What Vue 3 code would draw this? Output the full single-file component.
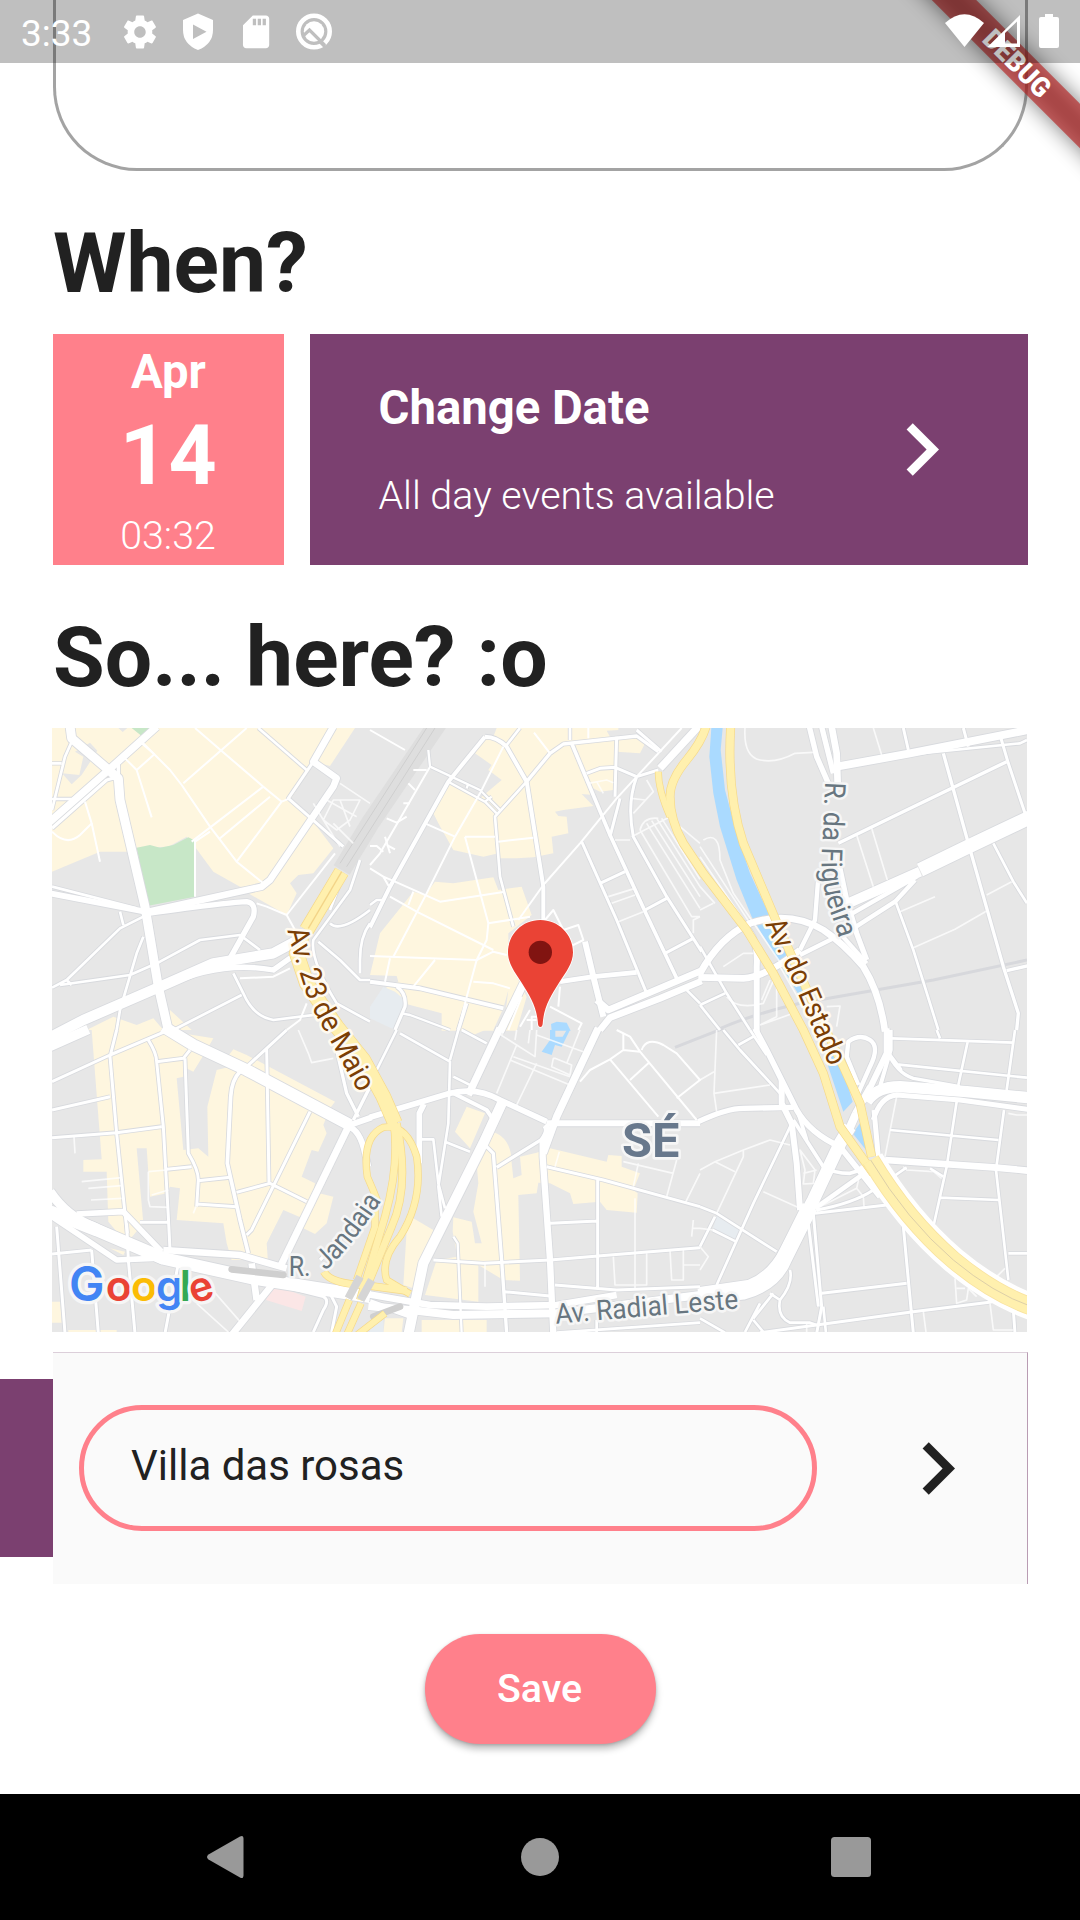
<script setup>
// Map geometry: each sheet is a 990 x 930 cell of the drawing plane,
// placed by its origin; streets are [width, path].
const sheets = [
  {
    x: 0, y: 0,
    land: [
      ['#fef6df', 'M36 24H945L870 138 820 125 800 150 765 215 805 230 785 260 880 385 820 460 775 465 750 490 770 520 740 585 625 520 665 500 600 500 520 455 468 385 440 350 385 380 290 383 270 395 180 395 140 412 36 455Z M140 930L220 890 290 915 340 895 370 930Z M390 870L455 930H390Z'],
      ['#e7e7e7', 'M150 68L172 92 125 165 95 193 66 160 118 165 130 110 105 95Z M825 130L885 175 800 285 750 240 785 190Z M235 24H262L248 36Z'],
      ['#c7e7c7', 'M290 383L330 375 360 383 400 375 445 352 466 362 465 530 325 557Z M275 24H345L305 48Z'],
    ],
    streets: [
      [27, 'M90 18L95 55 235 175 240 240 315 560 355 800 385 932'],
      [22, 'M30 305L200 155 350 20'],
      [10, 'M36 325L200 180 235 170V130L255 110'],
      [8, 'M36 130H65M95 65L75 110 36 270M36 237H95'],
      [6, 'M36 335Q80 380 120 345L155 310 135 245M155 310L180 425M255 115L290 150 335 292M290 150L343 103 305 70'],
      [6, 'M305 65L390 150 425 195 510 320 590 425 670 490M430 190L620 24M465 24L545 93 670 200 725 245 590 425M670 200L455 365M690 230L540 355M725 245L750 235M510 335L465 365V530'],
      [8, 'M655 24L800 150'],
      [20, 'M880 20L820 125 890 175 880 200 690 480 665 500 325 575'],
      [9, 'M820 125L745 235 910 380'],
      [18, 'M30 520L315 575'],
      [8, 'M36 500L290 565'],
      [16, 'M325 580Q580 545 620 545 650 550 640 590L570 715'],
      [6, 'M650 550L680 560 740 585 885 400M740 585L765 630'],
      [31, 'M30 952L130 900 360 800 520 730 700 700 770 662'],
      [16, 'M370 800Q540 720 700 750L770 700'],
      [8, 'M36 803L80 780 240 625 310 590M60 795L270 765 360 725 480 660 600 645 660 690M240 575L250 615M310 650L290 700 240 870 230 930M80 780L95 795'],
      [8, 'M580 760L610 820Q640 890 700 900L860 880M400 930L605 825'],
      [6, 'M600 775L700 770 750 745M800 850L780 900 740 930'],
      [8, 'M960 420L930 510 820 660Q810 720 890 850L990 905M870 610Q900 640 990 570M835 665L900 720 960 780H990M990 610Q960 650 960 720V760M900 490L870 570'],
      [5, 'M850 300L880 240 960 240 930 300 890 330ZM900 190L990 250M850 300L900 380M880 310L940 370M820 250L850 300M860 240L950 290M900 240L930 320'],
    ],
  },
  {
    x: 990, y: 0,
    land: [
      ['#fef6df', 'M380 24H745V30L710 32 720 50 790 50 825 70 810 100 740 95 730 210 690 215 650 195 670 225 635 222 670 258 580 270 555 275 565 288 590 290 595 340 545 350 550 400 490 412 440 415 385 415V400L340 410 250 390 205 310 190 280 215 230 235 180 330 235 395 180 355 150 365 135 315 100 345 50 370 50Z'],
      ['#fef6df', 'M195 485L250 490 370 472 385 510 455 500 485 585 415 640V720L470 830 440 932H215V880L100 850 40 835 50 800 85 785 80 768 0 765 30 640 130 515 165 525Z'],
      ['#e7ecf0', 'M40 800L75 815 105 840 100 880 75 930 0 895V860Z'],
      ['#e7e7e7', 'M415 810L400 930H370L400 865Z'],
      ['#aadaff', 'M543 912L560 905 590 908 602 932H545Z'],
    ],
    streets: [
      [12, 'M345 50L235 185 60 500 0 622M345 50Q380 50 410 80L470 185 520 500V610'],
      [8, 'M450 24L410 75M600 24V60M470 185L375 290 390 470 430 620'],
      [10, 'M470 185L540 100 580 72 800 48 865 95'],
      [11, 'M605 70L720 345 830 585 920 775'],
      [7, 'M175 90L180 140 330 210 390 270M235 185L345 245 380 280M345 245L365 230M290 205L295 190'],
      [6, 'M400 80L330 220 255 350 165 530 70 710M0 30L105 90M180 140L30 400 0 435M165 310L255 350M285 350L375 350M385 365L490 353M285 350L355 610 350 660 320 720 285 850 265 930M492 38L540 100M655 24V55'],
      [6, 'M130 150L170 150M115 190L135 210M100 250H120M50 295L80 308 110 290M0 378H20L40 395M50 375L75 388M45 350L60 400'],
      [6, 'M445 600L520 495 630 370 740 235 800 170 935 24'],
      [22, 'M985 20L870 145'],
      [9, 'M865 150L800 170 735 142 690 145 650 160M740 50L735 230M750 235L720 350M800 170Q770 250 790 350L890 530 995 695M800 30L875 95'],
      [9, 'M635 365L740 600 830 820M690 490L765 455M825 570L890 535M885 700L970 655'],
      [5, 'M715 530L795 505M725 550L795 525M745 605L820 575M735 360H780M785 235L825 240M830 180L850 215 790 280M655 190L710 180 730 188M680 185L700 220'],
      [6, 'M0 708L320 720 370 695 410 705M60 530L140 575 370 690M0 445L40 470 60 505M40 470L75 485 210 545 405 515M355 610L480 590M130 515L115 555M195 720L130 800M60 715L45 785M310 785L370 790 420 805'],
      [12, 'M0 785L150 805 400 865'],
      [10, 'M80 800Q110 820 105 860L75 930M290 850L265 930'],
      [7, 'M95 880L120 885 240 930M0 555L20 540H45'],
      [24, 'M480 750L390 935'],
      [14, 'M570 785L670 770 800 757'],
      [18, 'M645 665L670 770 700 890'],
      [20, 'M995 752L715 870 680 840M690 930L720 893 870 835 995 783'],
      [6, 'M525 600L550 570 580 630 625 615 640 660 600 680M570 800L565 860M540 860L635 910 625 930M450 920L480 870M470 900H500M485 930V890H510M455 830L415 930'],
      [5, 'M810 330L965 590H990M830 310L990 565M845 302L990 530M860 295L990 500M875 295L990 478M785 350L900 290M810 330Q820 290 865 295M990 590L970 600V640M930 320L990 370'],
      [8, 'M945 805L990 850'],
    ],
  },
  {
    x: 1980, y: 0,
    land: [
      ['#aadaff', 'M34 24H68L62 90 75 210 110 340 150 460 215 600 290 740 345 850 375 930H350L300 830 215 690 155 590 110 480 60 320 40 220 28 110Z'],
    ],
    streets: [
      [16, 'M328 20L350 110 385 190M365 20L400 160'],
      [20, 'M395 20L410 100 413 190'],
      [24, 'M410 140L630 100 985 30'],
      [8, 'M630 103L960 70 981 60'],
      [10, 'M415 370L600 280 920 125M730 100L805 370 910 740 955 880 950 930'],
      [9, 'M610 24L625 90M790 24L805 80M900 45L925 130 975 280'],
      [5, 'M135 24Q130 110 180 120 230 130 285 100L340 97M520 24L545 105M470 345L520 500M515 325L562 480'],
      [42, 'M990 292L800 382 660 450'],
      [30, 'M660 455L440 552'],
      [13, 'M650 470L440 590M645 480L585 545 460 625 300 705'],
      [8, 'M880 370L940 485 981 550M585 540L640 690 715 930'],
      [5, 'M600 575L705 530M640 683L765 628 860 573M860 525L935 485'],
      [16, 'M410 400L440 540 470 640 500 720'],
      [20, 'M0 760Q60 650 150 610 270 570 370 630 430 670 490 740 540 820 555 935'],
      [13, 'M355 470L345 600 300 690M420 640L500 730'],
      [20, 'M-5 772L130 775Q200 770 300 690'],
      [18, 'M140 625Q175 660 170 740V935'],
      [8, 'M0 680L80 820 150 930M0 855L75 820M0 855L60 930'],
      [10, 'M920 752L985 737'],
      [5, 'M70 740L130 700H160M80 830Q110 870 190 850L230 760V890L180 915M210 780L185 840M380 860L420 858 410 920M180 915L280 880M10 360Q60 330 60 420L100 520 290 800M0 380L150 610M0 410L130 600M0 570L40 550M0 500L45 550M240 740L350 930'],
    ],
  },
  {
    x: 0, y: 930,
    land: [
      ['#fef6df', 'M155 0H365L520 25 500 60 460 125 430 110V140L410 145 430 360 475 355 505 380 502 230 530 120 570 110 567 75 580 58 620 75 885 215 870 235 850 285 860 310 835 365 815 360 785 440 825 460 820 485 880 500 860 580 825 612 790 595 800 570 730 540 680 640 685 710 620 690 575 690 560 640 550 580 410 570 420 475 390 470 380 490 330 500 320 355 290 355 310 580 260 640 205 575 200 425H130V390L185 388Z'],
      ['#fef6df', 'M210 655L255 665 250 675ZM36 815H60L65 878H36ZM85 900H230V908H85Z'],
      ['#fbe6e6', 'M695 762L797 800 785 843 678 810Z'],
    ],
    streets: [
      [35, 'M370 -10L460 45 620 120 930 285'],
      [29, 'M28 50L145 -2'],
      [9, 'M36 155L210 75 375 5M230 0L210 80 230 310 255 550 262 610M36 240L210 200M36 323L230 308 365 290M325 30Q350 70 350 95L370 290 385 560 390 660M350 95L430 85 450 60M435 85L445 370Q475 420 475 450L470 530M380 418L455 410M475 452L570 442M470 522L590 530'],
      [11, 'M600 125Q575 150 572 200L562 400 600 570 625 670'],
      [9, 'M620 110L680 55 740 0M680 55L687 460M590 487L690 460 800 515M810 245L635 600 620 615'],
      [21, 'M925 290L720 712'],
      [18, 'M925 290Q960 300 975 370L985 410'],
      [10, 'M890 60L920 190 955 260M990 170L940 270'],
      [18, 'M930 285L995 262'],
      [28, 'M30 485Q80 560 160 590L370 690'],
      [38, 'M30 545L170 600 370 685 640 745 990 800'],
      [17, 'M36 560L230 690 340 685'],
      [17, 'M110 552L250 545 365 665'],
      [20, 'M370 660L600 675 740 715'],
      [9, 'M36 672L155 660M50 590L75 910M155 660L175 910M260 580L265 690 285 910M415 700L375 910M300 577H385'],
      [20, 'M635 700L650 810M700 760L575 915'],
      [9, 'M700 762L850 800Q870 810 850 840L820 906M870 790L890 830 875 906'],
      [5, 'M470 820L565 906M500 760L605 880M325 425V510L330 530 385 532M325 425L380 420M335 495L385 480M125 455L245 443M145 475L245 467M153 510L245 505M102 320L105 370M460 550L468 530M775 0L805 70 815 98 880 85'],
      [10, 'M840 690L870 660 980 540'],
    ],
  },
  {
    x: 990, y: 930,
    land: [
      ['#fef6df', 'M270 0H345L310 15ZM290 230L345 250 300 355 255 305ZM345 300Q425 310 425 400L430 445 455 435 450 380 500 368 540 355 710 395 715 375 755 378V410L810 430 790 480 803 490 800 548 710 540 690 515 610 522 600 490 540 460 505 458 500 490 445 495 450 752 400 750 325 705V815L165 795 200 690 262 680 248 605 250 562 305 575 315 640 335 640 310 545 325 460 320 400 345 350Z'],
      ['#fef6df', 'M130 565L190 600 130 775 100 765 110 600ZM155 870H350V908H155ZM45 865H100L95 908H40Z'],
      ['#e7ecf0', 'M0 880L40 870V908H0Z'],
      ['#aadaff', 'M540 0H556V20H578L590 0H600L575 50 555 45 545 75 515 65 540 30Z'],
    ],
    streets: [
      [17, 'M0 262L240 190Q320 170 390 210L530 275'],
      [18, 'M530 280H990'],
      [22, 'M390 -6L295 195'],
      [30, 'M398 215L340 340 160 700 115 915'],
      [12, 'M250 190L350 240 365 262'],
      [17, 'M162 222L148 250V400'],
      [8, 'M80 0L20 120M90 10L240 95 235 280 205 470 215 560M155 328H190L205 460 225 535M250 140L310 170M265 0L240 90M275 0L350 40M225 335L300 365'],
      [10, 'M345 345L370 370 395 690 410 910M380 412L520 325'],
      [22, 'M685 -6L560 260 520 370'],
      [19, 'M525 285Q540 300 518 330V380L540 690 550 912'],
      [9, 'M530 410L700 450 990 530M683 450V775M540 580L683 573M190 690L340 700 540 690 720 675 990 653M555 765L740 780 990 770M400 785L540 798'],
      [7, 'M250 620L263 640 275 910'],
      [20, 'M-5 793L180 825 350 830 560 825 740 795'],
      [24, 'M-5 828L140 842 250 855 560 850 990 795'],
      [16, 'M0 815L120 858'],
      [5, 'M385 10L440 45 380 190M430 80L500 105 600 140M420 90L600 165M500 100L440 225M630 0L590 100M550 85L545 110 600 135 605 105 555 85ZM400 0L395 15M440 0L435 30M440 45L495 80 500 0M480 0L475 40M500 15L640 65'],
      [5, 'M345 700V770M568 365L555 410M805 400L790 470M795 505V780M730 680L735 765H830V670M900 660L905 750H940V660M970 570L965 620M970 595H990M940 705H990M760 395L910 430M920 390L890 500M990 430L945 520'],
      [6, 'M630 155L660 120 720 88 865 260M720 88L760 60 810 65 780 20 740 0M760 60V10M815 60Q830 20 880 45L920 70 990 150 920 205M810 65L980 270M780 150L835 100'],
      [8, 'M560 908L990 878M680 870V910'],
    ],
  },
  {
    x: 1980, y: 930,
    land: [
      ['#e7ecf0', 'M50 555L130 595 108 635 38 600Z'],
      ['#aadaff', 'M372 60L385 110 430 245 458 215 425 105 400 60ZM458 310L480 280 510 375Z'],
    ],
    streets: [
      [8, 'M70 0L120 60 240 190'],
      [17, 'M165 -5L200 60 290 240Q330 310 420 350L540 500'],
      [16, 'M-5 275Q80 235 130 235L280 232'],
      [5, 'M50 0L42 190 50 245M42 190L210 165M0 150L42 125'],
      [8, 'M115 45L160 20M150 0L200 75'],
      [18, 'M245 150V220L275 280 290 400 300 540'],
      [8, 'M275 280L160 520 50 765M0 530L50 550 230 665M38 600L108 635M0 650L45 560'],
      [11, 'M280 270L370 410Q400 430 450 430L500 415M295 250L320 330'],
      [5, 'M190 485L300 535M0 420L45 395 130 360 210 330 270 345M45 395L105 425M130 360V380L50 550M0 595L40 600M0 650L25 680 0 720M300 360L345 420 340 460 310 462 315 420ZM310 430L350 420'],
      [38, 'M0 790L150 768Q220 740 260 660L340 510 420 340 450 290'],
      [48, 'M-5 800L130 785Q220 760 250 690L330 530'],
      [18, 'M425 340L465 250M450 300L490 210M465 250L510 170'],
      [14, 'M500 425L345 535'],
      [9, 'M520 480Q460 520 350 540M345 550L560 525M340 550L365 830 350 910M325 580L355 830'],
      [5, 'M480 430L470 475 490 500 492 530M470 475L360 530'],
      [34, 'M500 215Q530 170 600 170L800 185 985 203'],
      [15, 'M520 270Q540 200 590 195L780 210 985 238'],
      [10, 'M560 60Q590 130 640 145L780 170'],
      [13, 'M470 200L510 110Q540 50 510 30 480 10 445 35L440 80 475 165'],
      [18, 'M490 215L560 70V-5'],
      [12, 'M572 0V60L540 170'],
      [8, 'M575 25L940 38M945 0L920 180M590 103L981 143M803 35L775 165M710 0L720 25M560 60L605 120'],
      [8, 'M770 215L740 410 700 590M570 300L895 330M912 240L888 420 925 750M720 503L895 510M925 670H985'],
      [5, 'M590 200L555 380M925 250L950 255H981M610 410L620 420 700 425 725 445'],
      [20, 'M555 390L880 412 985 422'],
      [15, 'M522 240L535 380'],
      [8, 'M580 440L620 412M690 415L730 440'],
      [9, 'M610 590L640 910M365 790L620 760M180 908L350 885 640 845 880 815M940 840L945 910'],
      [5, 'M870 820L880 900H940M670 845L678 906M915 715L890 740M765 745L770 820 800 810 805 775 830 800M770 775H795M320 880V906'],
      [8, 'M210 790L240 810Q230 860 270 878H330L350 885M240 810Q280 760 270 720M180 820L135 906M160 870L190 906M220 790L160 865M0 865L75 908M370 830L378 910'],
    ],
  },
]

// Expressways in plane coordinates
const expressways = [
  [42, 'M905 455L800 630M785 650L770 700 800 790 890 920 970 1020 1030 1130 1065 1210'],
  [20, 'M1060 1200Q1080 1330 1035 1490L960 1740'],
  [20, 'M1070 1210Q1110 1400 1055 1520L985 1690'],
  [18, 'M1015 1450Q1000 1410 982 1370 965 1250 1030 1222 1100 1210 1130 1310 1150 1440 1080 1550 1020 1620 1040 1680L1110 1722'],
  [20, 'M852 1655Q870 1690 970 1695L1100 1712'],
  [18, 'M1005 1440V1520L950 1680M928 1740L885 1845M963 1750L920 1845M1035 1780L945 1850'],
  [17, 'M1855 155Q1855 210 1890 290'],
  [23, 'M1998 20Q1985 65 1940 120 1890 180 1890 230 1890 300 1930 370L1990 460 2120 630 2200 760 2290 930 2350 1060 2400 1220 2500 1360'],
  [23, 'M2072 20Q2060 220 2110 370L2220 630 2310 830 2410 1040 2460 1150 2495 1310'],
]
const trunk = 'M2492 1320Q2600 1500 2740 1620 2860 1720 2975 1760'

const google = [
  ['G', 87, '#4285f4'], ['o', 197, '#ea4335'], ['o', 273, '#fbbc05'],
  ['g', 348, '#4285f4'], ['l', 419, '#34a853'],
]
</script>

<template>
  <main class="screen">
    <section class="content">
      <div class="note-field"></div>

      <h1 class="heading">When?</h1>
      <div class="date-row">
        <div class="date-tile">
          <span class="month">Apr</span>
          <span class="day">14</span>
          <span class="time">03:32</span>
        </div>
        <div class="date-card">
          <div class="date-copy">
            <span class="date-title">Change Date</span>
            <span class="date-sub">All day events available</span>
          </div>
          <svg class="chevron" viewBox="0 0 24 24"><path d="M10 6L8.59 7.41 13.17 12l-4.58 4.59L10 18l6-6z" /></svg>
        </div>
      </div>

      <h1 class="heading second">So... here? :o</h1>
      <svg class="map" viewBox="36 24 2925 1812" preserveAspectRatio="none">
        <defs>
          <path id="lb-maio" d="M742 630L762 705 808 850 980 1160" />
          <path id="lb-figueira" d="M2356 185L2346 390Q2338 500 2380 600L2425 740" />
          <path id="lb-estado" d="M2175 612L2260 790 2412 1140" />
          <path id="lb-jandaia" d="M856 1652Q925 1595 1036 1425" />
          <path id="lb-radial" d="M1548 1811L2110 1764" />
        </defs>
        <rect x="0" y="0" width="3000" height="1900" fill="#e7e7e7" />
        <g v-for="s in sheets" :key="'l' + s.x + s.y" :transform="`translate(${s.x} ${s.y})`">
          <path v-for="(a, i) in s.land" :key="i" :fill="a[0]" :d="a[1]" />
        </g>
        <g fill="none">
          <path d="M1200 0L990 310 905 450" stroke="#dedede" stroke-width="56" />
          <path d="M1160 24L990 290 900 430M1185 24L990 330 920 440" stroke="#cfcfcf" stroke-width="3" />
          <path d="M2030 930Q2130 885 2280 850L2680 780 2961 720M1905 982L2050 925" stroke="#d7d8dc" stroke-width="9" />
        </g>
        <g class="casing">
          <g v-for="s in sheets" :key="'c' + s.x + s.y" :transform="`translate(${s.x} ${s.y})`">
            <path v-for="(r, i) in s.streets.filter((q) => q[0] > 6)" :key="i" :stroke-width="r[0] + 5" :d="r[1]" />
          </g>
        </g>
        <g class="paving">
          <g v-for="s in sheets" :key="'p' + s.x + s.y" :transform="`translate(${s.x} ${s.y})`">
            <path v-for="(r, i) in s.streets" :key="i" :stroke-width="r[0]" :opacity="r[0] < 6 ? 0.75 : 1" :d="r[1]" />
          </g>
        </g>
        <path d="M575 1648L730 1665M1000 1790L1080 1760" fill="none" stroke="#cfcfcf" stroke-width="20" stroke-linecap="round" />
        <g fill="none">
          <path :d="trunk" stroke="#fff" stroke-width="80" />
          <path v-for="(r, i) in expressways" :key="'e' + i" :d="r[1]" :stroke-width="r[0] + 4" stroke="#f6d989" />
          <path v-for="(r, i) in expressways" :key="'f' + i" :d="r[1]" :stroke-width="r[0]" stroke="#fff0ae" />
          <path :d="trunk" stroke="#f9e3a0" stroke-width="54" />
          <path :d="trunk" stroke="#fff0ae" stroke-width="49" />
          <path :d="trunk" stroke="#ddcfa8" stroke-width="3" />
          <path d="M905 455L805 625" stroke="#f3d488" stroke-width="4" />
          <path d="M925 1735L960 1670M962 1740L995 1680" stroke="#d5d5d5" stroke-width="24" />
        </g>

        <g class="road-name">
          <text class="brown" font-size="88"><textPath href="#lb-maio" textLength="538" lengthAdjust="spacingAndGlyphs">Av. 23 de Maio</textPath></text>
          <text class="brown" font-size="88"><textPath href="#lb-estado" textLength="470" lengthAdjust="spacingAndGlyphs">Av. do Estado</textPath></text>
          <text font-size="87"><textPath href="#lb-figueira" textLength="478" lengthAdjust="spacingAndGlyphs">R. da Figueira</textPath></text>
          <text font-size="83" x="746" y="1668" textLength="66" lengthAdjust="spacingAndGlyphs">R.</text>
          <text font-size="83"><textPath href="#lb-jandaia" textLength="270" lengthAdjust="spacingAndGlyphs">Jandaia</textPath></text>
          <text font-size="84"><textPath href="#lb-radial" textLength="550" lengthAdjust="spacingAndGlyphs">Av. Radial Leste</textPath></text>
          <text class="district" x="1746" y="1312" textLength="172" lengthAdjust="spacingAndGlyphs">SÉ</text>
        </g>

        <g class="google">
          <text v-for="(g, i) in google" :key="i" :x="g[1]" y="1742" :fill="g[2]" :font-size="g[0] === 'G' ? 142 : 128">{{ g[0] }}</text>
          <text transform="translate(460 1752) rotate(-18)" fill="#ea4335" font-size="122">e</text>
        </g>

        <path d="M1501 600C1447 600 1404 643 1404 697 1404 730 1423 755 1444 787 1470 828 1491 862 1494 912Q1495 921 1501 921 1507 921 1508 912C1511 862 1532 828 1558 787 1579 755 1599 730 1599 697 1599 643 1555 600 1501 600Z" fill="#ea4335" stroke="#fff" stroke-width="5" paint-order="stroke" />
        <circle cx="1501" cy="697" r="35" fill="#811411" />
      </svg>

      <div class="place-row">
        <div class="swipe-edge"></div>
        <div class="place-card">
          <div class="place-input">Villa das rosas</div>
          <svg class="chevron dark" viewBox="0 0 24 24"><path d="M10 6L8.59 7.41 13.17 12l-4.58 4.59L10 18l6-6z" /></svg>
        </div>
      </div>

      <button class="save">Save</button>
    </section>

    <nav class="nav-bar">
      <svg width="38" height="44" viewBox="0 0 38 44"><path d="M34 1.500Q37.500 -.5 37.500 4V40Q37.500 44.500 34 42.500L2.500 24.500Q-.5 22 2.500 19.500Z" fill="#999" /></svg>
      <svg class="home" width="38" height="38" viewBox="0 0 38 38"><circle cx="19" cy="19" r="19" fill="#999" /></svg>
      <svg width="40" height="40" viewBox="0 0 40 40"><rect width="40" height="40" rx="3.500" fill="#999" /></svg>
    </nav>

    <svg class="banner" width="220" height="200" viewBox="860 0 220 200">
      <defs><filter id="soft" x="-50%" y="-200%" width="200%" height="500%"><feGaussianBlur stdDeviation="10.400" /></filter></defs>
      <g transform="translate(1016.5 62.5) rotate(45)">
        <rect x="-200" y="-15.750" width="400" height="31.500" fill="#000" fill-opacity=".5" filter="url(#soft)" />
        <rect x="-200" y="-15.750" width="400" height="31.500" fill="#b71c1c" fill-opacity=".63" />
        <text y="9.700" x="1" text-anchor="middle" textLength="83" lengthAdjust="spacingAndGlyphs">DEBUG</text>
      </g>
    </svg>

    <header class="status-bar">
      <span class="clock">3:33</span>
      <svg class="left-icons" width="216" height="63" viewBox="120 0 216 63" fill="#fff">
        <g transform="translate(120.300 12.300) scale(1.640)"><path d="M19.430 12.980c.04-.32.07-.64.07-.98s-.03-.66-.07-.98l2.110-1.650c.19-.15.24-.42.12-.64l-2-3.460c-.12-.22-.39-.3-.61-.22l-2.490 1c-.52-.4-1.080-.73-1.690-.98l-.38-2.650C14.460 2.180 14.250 2 14 2h-4c-.25 0-.46.18-.49.42l-.38 2.650c-.61.25-1.170.59-1.690.98l-2.490-1c-.23-.09-.49 0-.61.22l-2 3.460c-.13.22-.07.49.12.64l2.110 1.650c-.04.32-.07.65-.07.98s.03.66.07.98l-2.110 1.650c-.19.15-.24.42-.12.64l2 3.460c.12.22.39.3.61.22l2.490-1c.52.4 1.080.73 1.690.98l.38 2.650c.03.24.24.42.49.42h4c.25 0 .46-.18.49-.42l.38-2.650c.61-.25 1.170-.59 1.690-.98l2.490 1c.23.09.49 0 .61-.22l2-3.460c.12-.22.07-.49-.12-.64l-2.110-1.650zM12 15.500c-1.930 0-3.500-1.570-3.500-3.500s1.570-3.500 3.500-3.500 3.500 1.570 3.500 3.500-1.570 3.500-3.500 3.500z" /></g>
        <path fill-rule="evenodd" d="M198 13.500L213 20V30Q213 44 198 50 183 44 183 30V20ZM193 24.500V39L206.500 31.800Z" />
        <g transform="translate(236.400 12.100) scale(1.640)"><path d="M18 2h-8L4.020 8 4 20c0 1.100.9 2 2 2h12c1.100 0 2-.9 2-2V4c0-1.100-.9-2-2-2zm-6 6h-2V4h2v4zm3 0h-2V4h2v4zm3 0h-2V4h2v4z" /></g>
        <circle cx="314" cy="31.500" r="15.700" fill="none" stroke="#fff" stroke-width="4.600" />
        <circle cx="314" cy="31.500" r="10.200" />
        <path d="M303 36L309.500 30 325 45.500" fill="none" stroke="#bfbfbf" stroke-width="3.200" />
        <path d="M320 42L327 49" stroke="#bfbfbf" stroke-width="3" />
      </svg>
      <svg class="right-icons" width="120" height="63" viewBox="942 0 120 63" fill="#fff">
        <path d="M945 23Q964.500 5.500 984 23L964.500 47Z" />
        <path fill-rule="evenodd" d="M987.500 47L1020 15V47ZM1005 32V43.500H1017V21.500L1005 33Z" />
        <path d="M1045 14H1053V17H1057Q1059 17 1059 19V46Q1059 48 1057 48H1041Q1039 48 1039 46V19Q1039 17 1041 17H1045Z" />
      </svg>
    </header>
  </main>
</template>

<style>
body {
  background: #fff;
}
</style>

<style scoped>
.screen {
  position: relative;
  display: flex;
  flex-direction: column;
  width: 1080px;
  height: 1920px;
  overflow: hidden;
  background: #fff;
  font-family: Roboto, "Liberation Sans", sans-serif;
  color: #212121;
}
.content {
  flex: 1;
  display: flex;
  flex-direction: column;
}
.note-field {
  box-sizing: border-box;
  height: 171px;
  margin: 0 52px 0 53px;
  border: 3px solid #a3a3a3;
  border-top: 0;
  border-radius: 0 0 84px 84px;
}
.heading {
  margin: 44px 0 21px 53px;
  height: 98px;
  line-height: 98px;
  font-size: 84px;
  font-weight: 700;
  letter-spacing: 0;
  white-space: nowrap;
}
.heading.second {
  margin-top: 44px;
}
.date-row {
  display: flex;
  gap: 26px;
  height: 231px;
  margin: 0 52px 0 53px;
  color: #fff;
}
.date-tile {
  width: 231px;
  display: flex;
  flex-direction: column;
  align-items: center;
  background: #ff808b;
}
.month {
  margin-top: 10px;
  line-height: 56px;
  font-size: 47.250px;
  font-weight: 700;
}
.day {
  line-height: 98px;
  margin-top: 7px;
  font-size: 84px;
  font-weight: 700;
  letter-spacing: .5px;
}
.time {
  line-height: 46px;
  margin: 8px 1px 0 0;
  font-size: 39.375px;
  font-weight: 300;
}
.date-card {
  flex: 1;
  display: flex;
  align-items: center;
  justify-content: space-between;
  padding: 0 54.500px 0 68.500px;
  background: #7b4070;
}
.date-copy {
  display: flex;
  flex-direction: column;
}
.date-title {
  line-height: 56px;
  font-size: 47.250px;
  font-weight: 700;
}
.date-sub {
  margin-top: 37px;
  line-height: 46px;
  font-size: 39.375px;
  font-weight: 300;
}
.chevron {
  width: 105px;
  height: 105px;
  fill: #fff;
}
.chevron.dark {
  fill: #212121;
}
.map {
  display: block;
  width: 975px;
  height: 604px;
  margin-left: 52px;
  flex: none;
}
.casing,
.paving {
  fill: none;
  stroke-linejoin: round;
}
.casing {
  stroke: #d8dade;
}
.paving {
  stroke: #fff;
}
.road-name text {
  fill: #687680;
  stroke: #f6f6f6;
  stroke-width: 16px;
  stroke-linejoin: round;
  paint-order: stroke;
}
.road-name .brown {
  fill: #7a3e05;
  stroke: #fffaf0;
}
.road-name .district {
  font-size: 146px;
  font-weight: 700;
  fill: #68788c;
}
.google text {
  font-family: Inter, sans-serif;
  font-weight: 600;
  stroke: #f6f6f6;
  stroke-width: 20px;
  stroke-linejoin: round;
  paint-order: stroke;
}
.place-row {
  display: flex;
  height: 232px;
  margin: 20px 52px 0 0;
}
.swipe-edge {
  width: 53px;
  height: 178px;
  margin-top: 27px;
  background: #7b4070;
}
.place-card {
  flex: 1;
  box-sizing: border-box;
  display: flex;
  align-items: center;
  justify-content: space-between;
  padding: 0 37.500px 0 26px;
  border-top: 1px solid #dccfda;
  border-right: 1px solid #b99cb3;
  background: #fafafa;
}
.place-input {
  box-sizing: border-box;
  width: 738px;
  height: 126px;
  margin-bottom: 1px;
  padding-left: 47px;
  border: 5.250px solid #ff808b;
  border-radius: 63px;
  line-height: 111px;
  font-size: 42px;
}
.save {
  width: 231px;
  height: 110px;
  margin: 50px 0 0 424.500px;
  padding: 0 1px 2px 0;
  border: 0;
  border-radius: 55px;
  background: #ff808b;
  box-shadow: 0 5px 7px rgba(0, 0, 0, .26), 0 1px 3px rgba(0, 0, 0, .16);
  color: #fff;
  font-family: inherit;
  font-size: 39.375px;
  font-weight: 500;
}
.nav-bar {
  box-sizing: border-box;
  display: flex;
  align-items: center;
  justify-content: space-between;
  height: 126px;
  padding: 0 209px 0 206px;
  background: #000;
}
.home {
  margin-left: 5px;
}
.banner {
  position: absolute;
  top: 0;
  right: 0;
}
.banner text {
  font-size: 27.500px;
  font-weight: 900;
  fill: #fff;
}
.status-bar {
  position: absolute;
  inset: 0 0 auto 0;
  display: flex;
  align-items: center;
  height: 63px;
  padding: 0 18px 0 21px;
  background: rgba(0, 0, 0, .25);
  color: #fff;
}
.clock {
  width: 99px;
  line-height: 63px;
  font-size: 37px;
  padding-top: 3px;
}
.right-icons {
  margin-left: auto;
}
</style>
